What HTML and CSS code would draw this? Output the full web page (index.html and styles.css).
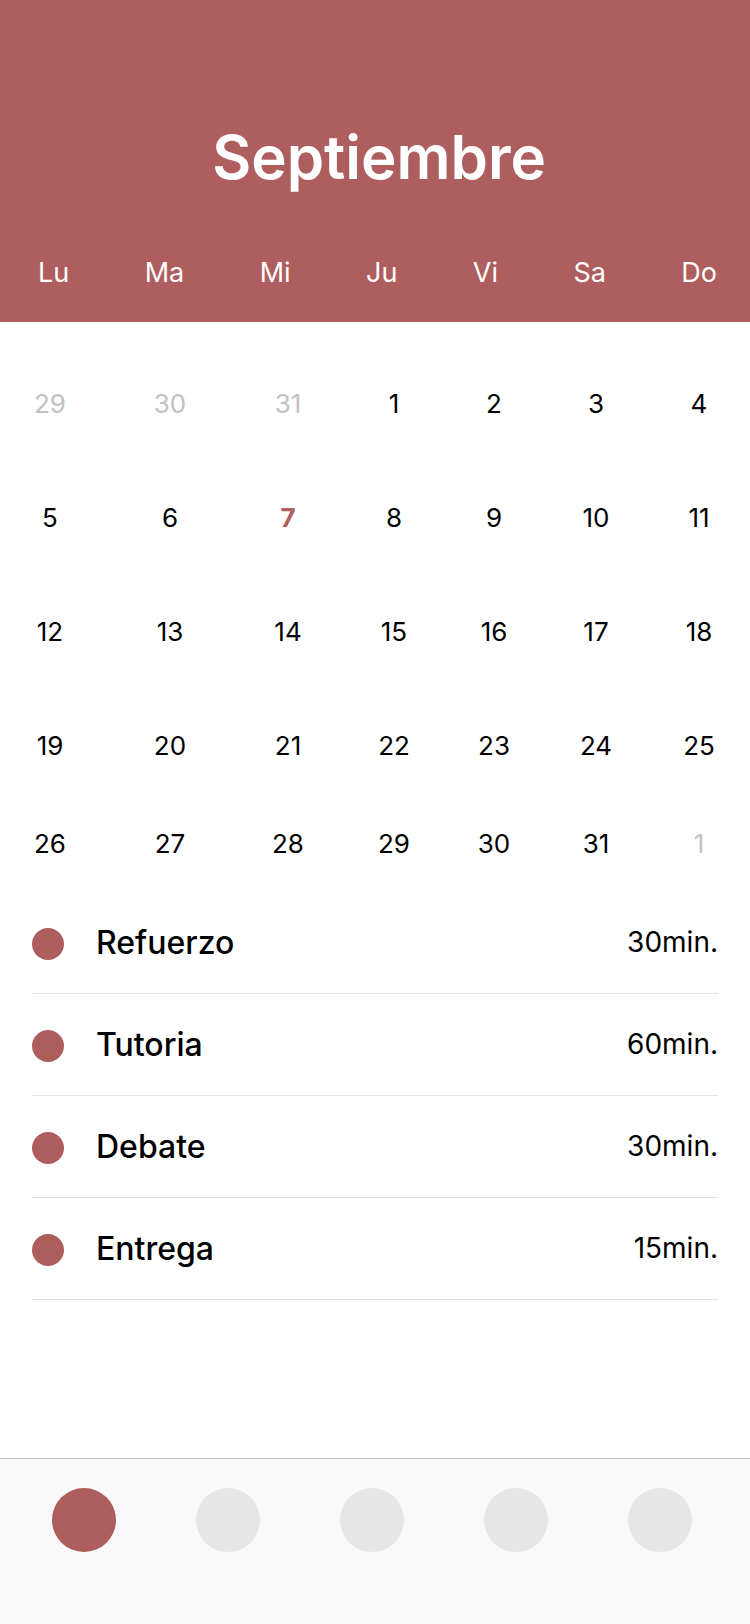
FILE: index.html
```html
<!DOCTYPE html>
<html lang="es">
<head>
<meta charset="utf-8">
<title>Septiembre</title>
<link rel="stylesheet" href="styles.css">
</head>
<body>
<div class="app">
  <header class="header">
    <h1 class="title">Septiembre</h1>
    <div class="weekdays">
      <span>Lu</span><span>Ma</span><span>Mi</span><span>Ju</span><span>Vi</span><span>Sa</span><span>Do</span>
    </div>
  </header>

  <section class="calendar">
    <div class="week">
      <span class="day muted">29</span><span class="day muted">30</span><span class="day muted">31</span><span class="day">1</span><span class="day">2</span><span class="day">3</span><span class="day">4</span>
    </div>
    <div class="week">
      <span class="day">5</span><span class="day">6</span><span class="day today">7</span><span class="day">8</span><span class="day">9</span><span class="day">10</span><span class="day">11</span>
    </div>
    <div class="week">
      <span class="day">12</span><span class="day">13</span><span class="day">14</span><span class="day">15</span><span class="day">16</span><span class="day">17</span><span class="day">18</span>
    </div>
    <div class="week">
      <span class="day">19</span><span class="day">20</span><span class="day">21</span><span class="day">22</span><span class="day">23</span><span class="day">24</span><span class="day">25</span>
    </div>
    <div class="week last">
      <span class="day">26</span><span class="day">27</span><span class="day">28</span><span class="day">29</span><span class="day">30</span><span class="day">31</span><span class="day muted">1</span>
    </div>
  </section>

  <ul class="events">
    <li class="event"><span class="dot"></span><span class="name">Refuerzo</span><span class="time">30min.</span></li>
    <li class="event"><span class="dot"></span><span class="name">Tutoria</span><span class="time">60min.</span></li>
    <li class="event"><span class="dot"></span><span class="name">Debate</span><span class="time">30min.</span></li>
    <li class="event"><span class="dot"></span><span class="name">Entrega</span><span class="time">15min.</span></li>
  </ul>

  <nav class="tabbar">
    <span class="tab active"></span>
    <span class="tab"></span>
    <span class="tab"></span>
    <span class="tab"></span>
    <span class="tab"></span>
  </nav>
</div>
</body>
</html>
```

FILE: styles.css
```css
* { box-sizing: border-box; }

html, body {
  margin: 0;
  padding: 0;
  background: #ffffff;
}

body {
  font-family: "Inter", "Noto Sans", "Liberation Sans", sans-serif;
  color: #000;
}

.app {
  width: 750px;
  min-height: 1624px;
  display: flex;
  flex-direction: column;
}

.header {
  background: #ae5e5e;
  color: #fff;
  padding: 119px 0 33px;
  display: flex;
  flex-direction: column;
}

.title {
  margin: 0;
  padding-left: 8px;
  font-size: 60px;
  line-height: 76px;
  font-weight: 600;
  text-align: center;
  letter-spacing: 0;
}

.weekdays {
  margin-top: 62px;
  padding: 0 33px 0 38px;
  display: flex;
  justify-content: space-between;
  font-size: 27px;
  line-height: 32px;
  font-weight: 400;
}

.calendar {
  padding-top: 25px;
  display: flex;
  flex-direction: column;
}

.week {
  height: 114px;
  display: grid;
  grid-template-columns: 100px 140px 96px 116px 84px 120px 86px;
  align-items: center;
}

.week.last {
  height: 82px;
  align-items: end;
  padding-bottom: 25px;
}

.day {
  text-align: center;
  font-size: 26px;
  line-height: 32px;
  color: #000;
}

.day.muted { color: #c2c2c2; }

.day.today {
  color: #ae5e5e;
  font-weight: 700;
}

.events {
  list-style: none;
  margin: 7px 32px 0;
  padding: 0;
}

.event {
  height: 102px;
  padding: 36px 0 33px;
  border-bottom: 1px solid #e2e2e2;
  display: flex;
  align-items: center;
}

.dot {
  width: 32px;
  height: 32px;
  border-radius: 50%;
  background: #ae5e5e;
  flex: none;
}

.name {
  margin-left: 32px;
  font-size: 32px;
  font-weight: 500;
  flex: 1;
  position: relative;
  top: -2px;
}

.time {
  font-size: 28px;
  font-weight: 400;
  position: relative;
  top: -2px;
}

.tabbar {
  margin-top: auto;
  height: 166px;
  background: #f9f9f9;
  border-top: 1px solid #bcc6cf;
  display: flex;
  align-items: flex-start;
  gap: 80px;
  padding: 29px 0 0 52px;
}

.tab {
  width: 64px;
  height: 64px;
  border-radius: 50%;
  background: #e6e6e6;
  flex: none;
}

.tab.active { background: #ae5e5e; }
```
